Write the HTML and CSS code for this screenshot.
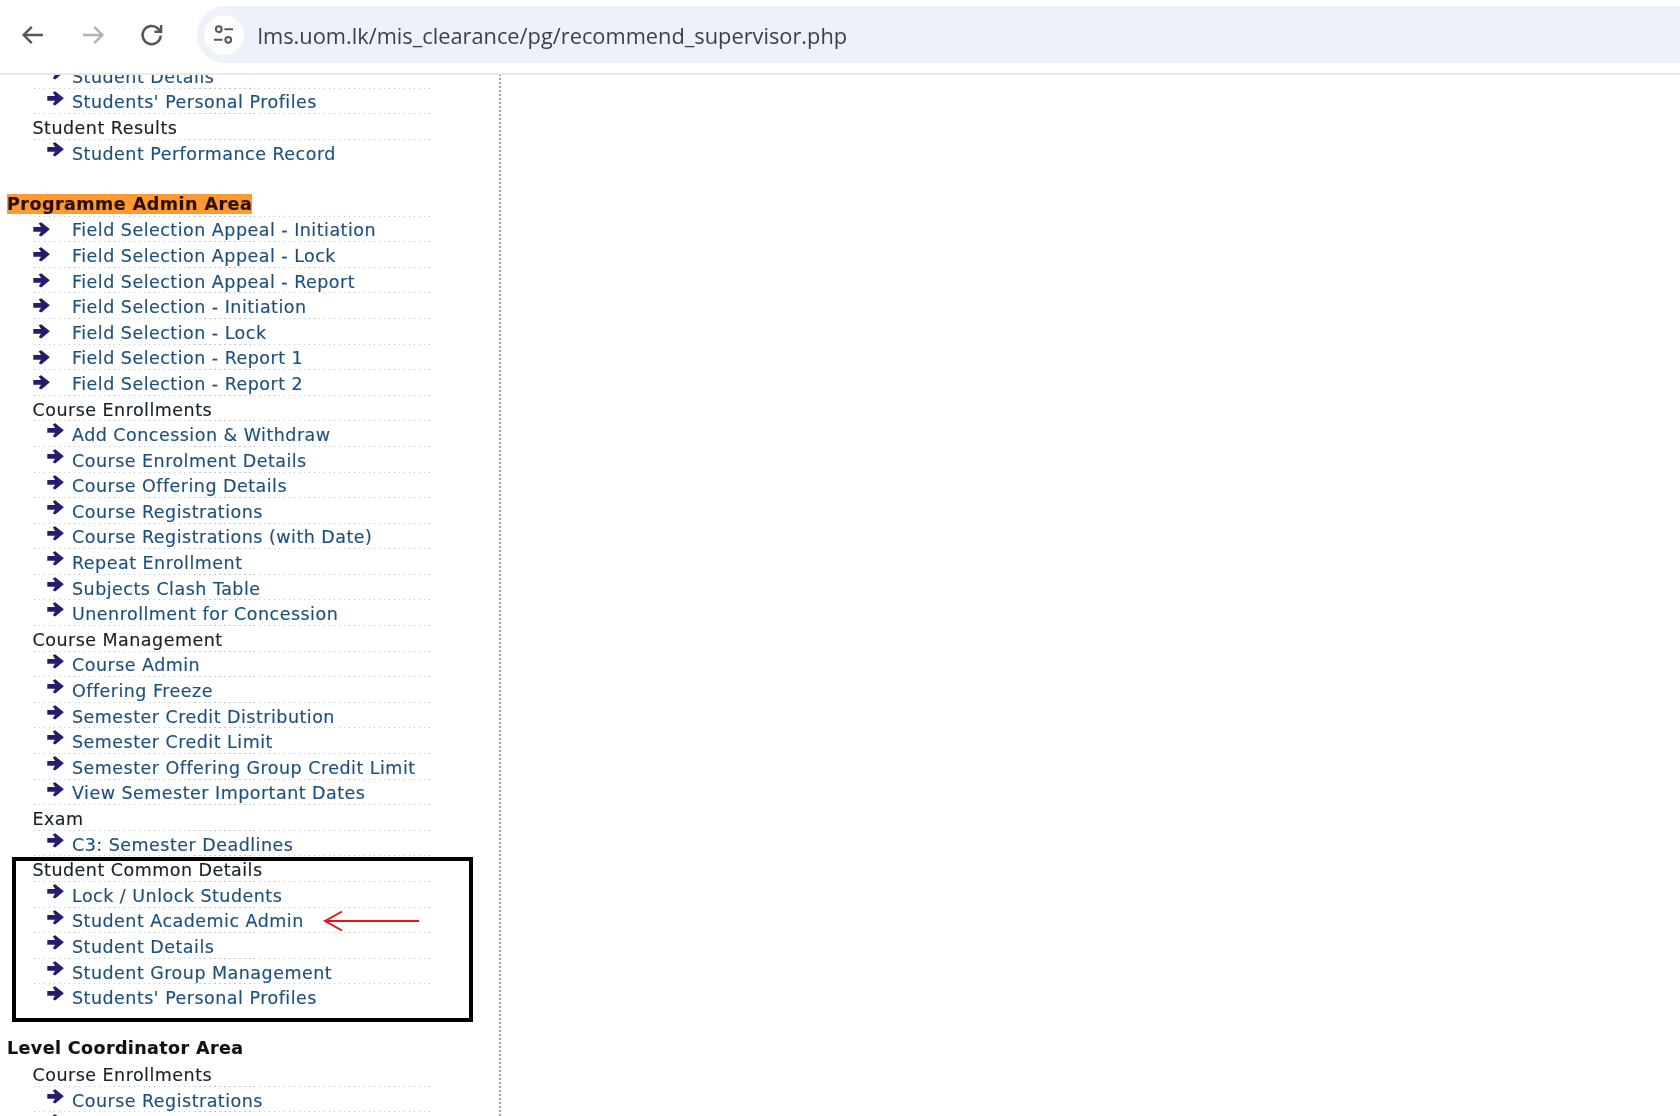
FILE: index.html
```html
<!DOCTYPE html>
<html lang="en">
<head>
<meta charset="utf-8">
<title>recommend_supervisor</title>
<link rel="stylesheet" href="styles.css">
</head>
<body>
<svg class="defs" width="0" height="0" aria-hidden="true">
  <symbol id="go" viewBox="0 0 17 15"><path d="M0.300 5H8L5.800 1.300L8.200 0.200L16.900 7.300L8.200 14.400L5.800 13.300L8 9.800H0.300Z"/></symbol>
</svg>
<header class="toolbar">
  <svg class="nav" viewBox="0 0 24 24"><path class="s-dark" d="M20.500 12H4.500M11 5l-7 7 7 7"/></svg>
  <svg class="nav" viewBox="0 0 24 24"><path class="s-grey" d="M3.500 12h16M13 5l7 7-7 7"/></svg>
  <svg class="nav" viewBox="0 0 24 24"><path class="s-dark" d="M19.500 12.500a7.800 7.800 0 1 1-2.300-6l2.300 2.400M19.800 3.500v5.700h-5.700"/></svg>
  <div class="omnibox">
    <span class="tune"><svg viewBox="0 0 24 24"><circle class="s-dark" cx="7" cy="6.500" r="3"/><path class="s-dark" d="M13 6.500h9M2 17.500h9"/><circle class="s-dark" cx="17" cy="17.500" r="3"/></svg></span>
    <span class="url">lms.uom.lk/mis_clearance/pg/recommend_supervisor.php</span>
  </div>
</header>
<main class="page">
  <nav class="menu">
    <a class="row sub"><svg class="go"><use href="#go"/></svg>Student Details</a>
    <a class="row sub"><svg class="go"><use href="#go"/></svg>Students' Personal Profiles</a>
    <div class="row head">Student Results</div>
    <a class="row sub end"><svg class="go"><use href="#go"/></svg>Student Performance Record</a>
    <div class="row end"></div>
    <div class="row area"><span class="mark">Programme Admin Area</span></div>
    <a class="row top"><svg class="go"><use href="#go"/></svg>Field Selection Appeal - Initiation</a>
    <a class="row top"><svg class="go"><use href="#go"/></svg>Field Selection Appeal - Lock</a>
    <a class="row top"><svg class="go"><use href="#go"/></svg>Field Selection Appeal - Report</a>
    <a class="row top"><svg class="go"><use href="#go"/></svg>Field Selection - Initiation</a>
    <a class="row top"><svg class="go"><use href="#go"/></svg>Field Selection - Lock</a>
    <a class="row top"><svg class="go"><use href="#go"/></svg>Field Selection - Report 1</a>
    <a class="row top"><svg class="go"><use href="#go"/></svg>Field Selection - Report 2</a>
    <div class="row head">Course Enrollments</div>
    <a class="row sub"><svg class="go"><use href="#go"/></svg>Add Concession &amp; Withdraw</a>
    <a class="row sub"><svg class="go"><use href="#go"/></svg>Course Enrolment Details</a>
    <a class="row sub"><svg class="go"><use href="#go"/></svg>Course Offering Details</a>
    <a class="row sub"><svg class="go"><use href="#go"/></svg>Course Registrations</a>
    <a class="row sub"><svg class="go"><use href="#go"/></svg>Course Registrations (with Date)</a>
    <a class="row sub"><svg class="go"><use href="#go"/></svg>Repeat Enrollment</a>
    <a class="row sub"><svg class="go"><use href="#go"/></svg>Subjects Clash Table</a>
    <a class="row sub"><svg class="go"><use href="#go"/></svg>Unenrollment for Concession</a>
    <div class="row head">Course Management</div>
    <a class="row sub"><svg class="go"><use href="#go"/></svg>Course Admin</a>
    <a class="row sub"><svg class="go"><use href="#go"/></svg>Offering Freeze</a>
    <a class="row sub"><svg class="go"><use href="#go"/></svg>Semester Credit Distribution</a>
    <a class="row sub"><svg class="go"><use href="#go"/></svg>Semester Credit Limit</a>
    <a class="row sub"><svg class="go"><use href="#go"/></svg>Semester Offering Group Credit Limit</a>
    <a class="row sub"><svg class="go"><use href="#go"/></svg>View Semester Important Dates</a>
    <div class="row head">Exam</div>
    <a class="row sub"><svg class="go"><use href="#go"/></svg>C3: Semester Deadlines</a>
    <section class="callout">
      <div class="row head">Student Common Details</div>
      <a class="row sub"><svg class="go"><use href="#go"/></svg>Lock / Unlock Students</a>
      <a class="row sub"><svg class="go"><use href="#go"/></svg>Student Academic Admin</a>
      <a class="row sub"><svg class="go"><use href="#go"/></svg>Student Details</a>
      <a class="row sub"><svg class="go"><use href="#go"/></svg>Student Group Management</a>
      <a class="row sub end"><svg class="go"><use href="#go"/></svg>Students' Personal Profiles</a>
      <div class="callout-box"></div>
      <svg class="red-arrow" viewBox="0 0 96 22"><path d="M96 11H2M19 1.500L2 11l17 9.500"/></svg>
    </section>
    <div class="row end"></div>
    <div class="row area end">Level Coordinator Area</div>
    <div class="row head">Course Enrollments</div>
    <a class="row sub"><svg class="go"><use href="#go"/></svg>Course Registrations</a>
    <div class="row sub end"><svg class="go"><use href="#go"/></svg></div>
  </nav>
</main>
</body>
</html>
```
FILE: styles.css
```css
* { box-sizing: border-box; }
html, body { margin: 0; height: 100%; overflow: hidden; background: #fff; }
body { display: flex; flex-direction: column; height: 1116px; }
.defs { position: absolute; }

.toolbar { flex: none; height: 75px; display: flex; align-items: center; background: #fff; border-bottom: 2px solid #e8e8e8; padding: 0 0 4px 19px; position: relative; z-index: 1; filter: blur(.4px); }
.nav { flex: none; width: 28px; height: 28px; margin-right: 31.500px; }
.s-dark { stroke: #55575a; fill: none; stroke-width: 2.1; }
.s-grey { stroke: #b0b2b5; fill: none; stroke-width: 2.1; }
.omnibox { flex: 1; height: 57px; margin-left: -1px; background: #edf1f9; border-radius: 28px 0 0 28px; display: flex; align-items: center; padding-left: 7px; }
.tune { flex: none; width: 40px; height: 40px; border-radius: 50%; background: #fdfdfe; display: flex; align-items: center; justify-content: center; }
.tune svg { width: 23px; height: 23px; }
.url { margin-left: 14px; position: relative; top: .5px; font: 21.800px "Open Sans", "Noto Sans", sans-serif; color: #3c3f43; white-space: nowrap; }

.page { flex: 1; min-height: 0; overflow: hidden; }
.menu { width: 501px; margin-top: -12px; height: 1100px; border-right: 2px dotted #a0a0a0; font: 17.500px "DejaVu Sans", sans-serif; letter-spacing: .48px; -webkit-text-stroke: .15px; filter: blur(.4px); }
.row { display: flex; align-items: center; height: 25.600px; width: 431px; padding-top: 2px; white-space: nowrap; color: #15202b; position: relative; }
.row::after { content: ""; position: absolute; left: 34px; right: 0; bottom: 0; height: 1px; background: repeating-linear-gradient(90deg, #c8c8c2 0 1.500px, transparent 1.500px 5px); }
.end::after { display: none; }
.sub, .top { color: #1d4f7d; padding-left: 72px; }
.go { position: absolute; width: 17px; height: 15px; top: 2px; fill: #2a1a6b; }
.sub .go { left: 47px; }
.top .go { left: 33px; top: 5px; }
.head { padding-left: 32.500px; }
.area { padding: 0 0 0 7px; font-weight: bold; color: #111; letter-spacing: .4px; }
.mark { background: #ff9a33; line-height: 20px; margin-right: auto; color: #2a1000; letter-spacing: .48px; }

.callout { position: relative; }
.callout-box { position: absolute; left: 12px; top: 1px; width: 461px; height: 165px; border: 4px solid #000; pointer-events: none; }
.red-arrow { position: absolute; left: 323px; top: 54px; width: 96px; height: 22px; fill: none; stroke: #f01010; stroke-width: 2; overflow: visible; }
```
